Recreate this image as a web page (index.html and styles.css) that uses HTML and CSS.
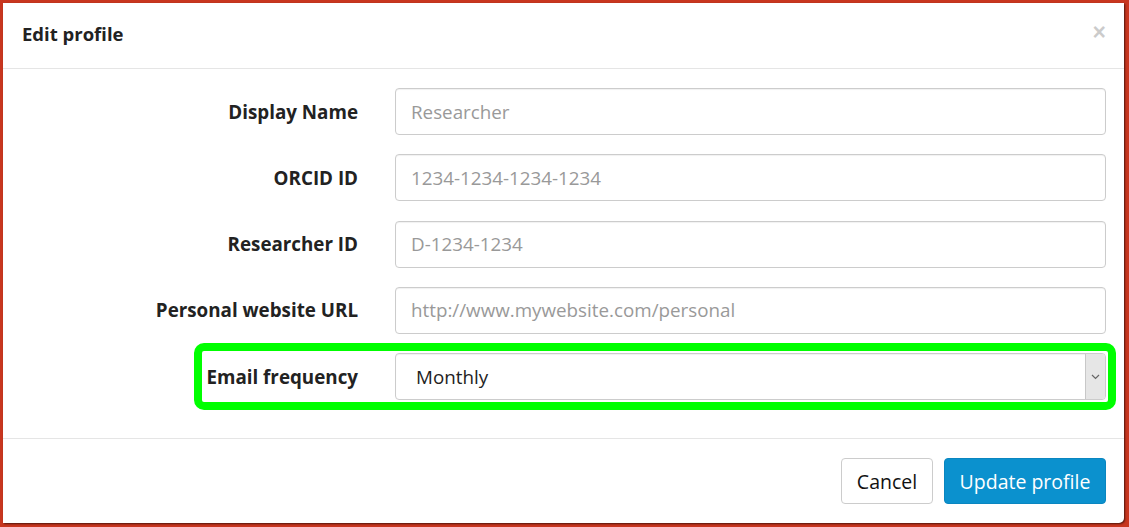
FILE: index.html
```html
<!DOCTYPE html>
<html lang="en">
<head>
<meta charset="utf-8">
<title>Edit profile</title>
<link rel="stylesheet" href="styles.css">
</head>
<body>
<div class="modal">
  <div class="modal-header">
    <h4 class="modal-title">Edit profile</h4>
    <button class="close" type="button" aria-label="Close">×</button>
  </div>
  <form class="modal-body">
    <div class="row">
      <label class="label" for="dn">Display Name</label>
      <input class="field" id="dn" type="text" placeholder="Researcher">
    </div>
    <div class="row">
      <label class="label" for="orcid">ORCID ID</label>
      <input class="field" id="orcid" type="text" placeholder="1234-1234-1234-1234">
    </div>
    <div class="row">
      <label class="label" for="rid">Researcher ID</label>
      <input class="field" id="rid" type="text" placeholder="D-1234-1234">
    </div>
    <div class="row">
      <label class="label" for="url">Personal website URL</label>
      <input class="field" id="url" type="text" placeholder="http://www.mywebsite.com/personal">
    </div>
    <div class="row highlighted">
      <label class="label" for="freq">Email frequency</label>
      <div class="select-wrap">
        <select class="field select" id="freq">
          <option>Monthly</option>
          <option>Weekly</option>
          <option>Never</option>
        </select>
        <span class="select-arrow"><svg width="9" height="6" viewBox="0 0 9 6"><path d="M1 1 L4.5 4.5 L8 1" fill="none" stroke="#666" stroke-width="1.2"/></svg></span>
      </div>
    </div>
  </form>
  <div class="modal-footer">
    <button class="btn btn-default" type="button">Cancel</button>
    <button class="btn btn-primary" type="button">Update profile</button>
  </div>
</div>
</body>
</html>
```

FILE: styles.css
```css
html, body {
  margin: 0;
  padding: 0;
}
body {
  background: #c8361f;
  font-family: "Open Sans", "DejaVu Sans", sans-serif;
  color: #333;
  width: 1129px;
  height: 527px;
  overflow: hidden;
}
.modal {
  margin: 3px 0 0 3px;
  width: 1121px;
  height: 520px;
  background: #fff;
  border-radius: 0 0 5px 0;
  box-shadow: 1px 1px 2px rgba(0,0,0,0.6);
  display: flex;
  flex-direction: column;
}
.modal-header {
  height: 66px;
  box-sizing: border-box;
  border-bottom: 1px solid #e5e5e5;
  padding: 0 18px 4px 19px;
  display: flex;
  align-items: center;
  justify-content: space-between;
}
.modal-title {
  margin: 0;
  font-size: 18.5px;
  font-weight: 700;
  color: #222;
}
.close {
  border: 0;
  background: none;
  padding: 0;
  font-family: "Liberation Sans", Arial, sans-serif;
  font-size: 23px;
  font-weight: 700;
  color: #000;
  opacity: 0.2;
  line-height: 1;
  margin-top: -2px;
}
.modal-body {
  padding: 19px 18px 0 18px;
  height: 369px;
  box-sizing: border-box;
  display: flex;
  flex-direction: column;
  gap: 19.33px;
  margin: 0;
}
.row {
  display: grid;
  grid-template-columns: 1fr 711px;
  column-gap: 36px;
  align-items: center;
  height: 47px;
}
.label {
  text-align: right;
  font-size: 18.8px;
  font-weight: 700;
  color: #222;
  margin-right: 1px;
}
.field {
  box-sizing: border-box;
  width: 100%;
  height: 47px;
  border: 1px solid #ccc;
  border-radius: 4px;
  padding: 0 15px;
  font-family: "Open Sans", "DejaVu Sans", sans-serif;
  font-size: 18.8px;
  color: #333;
  background: #fff;
  box-shadow: inset 0 1px 1px rgba(0,0,0,0.06);
  outline: none;
}
.field::placeholder {
  color: #999;
}
.highlighted {
  position: relative;
}
.highlighted::after {
  content: "";
  position: absolute;
  left: 173px;
  top: -10px;
  right: -10px;
  bottom: -10px;
  border: 8px solid #00ff00;
  border-radius: 10px;
  pointer-events: none;
}
.select-wrap {
  position: relative;
  height: 47px;
}
.select {
  appearance: none;
  -webkit-appearance: none;
  padding-left: 20px;
  color: #222;
}
.select-arrow {
  position: absolute;
  top: 1px;
  right: 1px;
  bottom: 1px;
  width: 19px;
  background: #e6e6e6;
  border-left: 1px solid #c8c8c8;
  border-radius: 0 3px 3px 0;
  display: flex;
  align-items: center;
  justify-content: center;
  pointer-events: none;
}
.modal-footer {
  border-top: 1px solid #e5e5e5;
  padding: 19px 18px 19px 0;
  display: flex;
  justify-content: flex-end;
  gap: 11px;
}
.btn {
  height: 46px;
  box-sizing: border-box;
  border-radius: 4px;
  font-family: "Open Sans", "DejaVu Sans", sans-serif;
  font-size: 19.5px;
  padding: 0;
  cursor: pointer;
}
.btn-default {
  background: #fff;
  border: 1px solid #ccc;
  color: #111;
  width: 92px;
}
.btn-primary {
  background: #0b91ce;
  border: 1px solid #0a86c0;
  color: #fff;
  width: 162px;
  font-weight: 500;
}
```
